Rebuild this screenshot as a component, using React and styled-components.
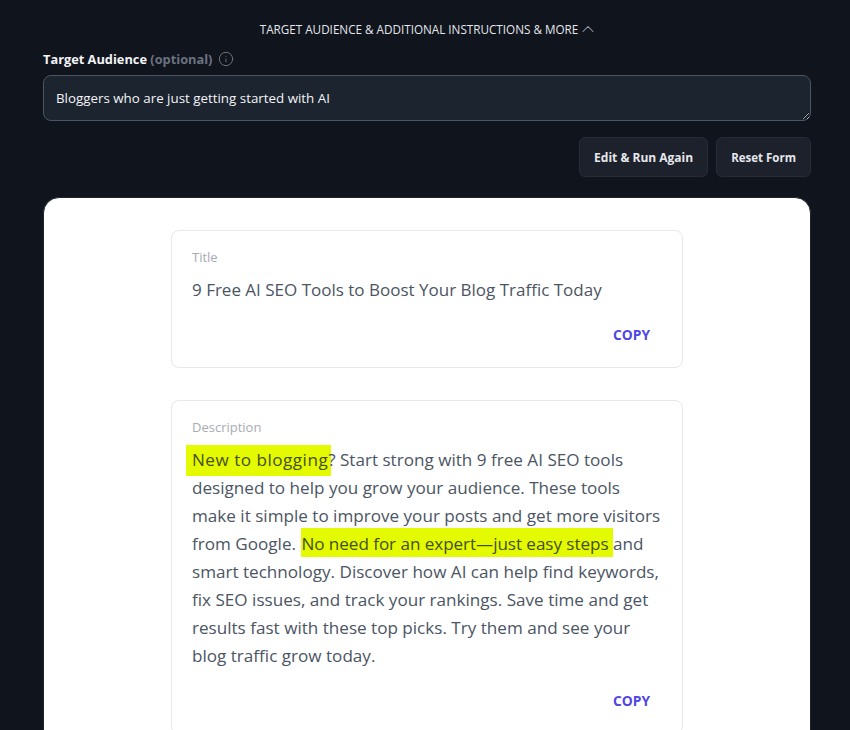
import React from 'react';
import styled, { createGlobalStyle } from 'styled-components';
import { ChevronUp, Info } from 'lucide-react';

const GlobalStyle = createGlobalStyle`
  html, body {
    margin: 0;
    height: 730px;
    overflow: hidden;
    background-color: #10141d;
  }
  * {
    box-sizing: border-box;
  }
`;

const Page = styled.div`
  width: 850px;
  padding: 0 39px 0 43px;
  font-family: "Open Sans", "Noto Sans", sans-serif;
`;

const Toggle = styled.div`
  display: flex;
  align-items: center;
  justify-content: center;
  height: 51px;
  padding: 7px 0 1px 4px;
  font-size: 11.7px;
  color: #e5e7eb;
  text-transform: uppercase;
`;

const LabelRow = styled.div`
  display: flex;
  align-items: center;
  gap: 6px;
  height: 16px;
  margin-bottom: 8px;
`;

const Label = styled.span`
  font-size: 12.8px;
  font-weight: 700;
  color: #f3f4f6;
`;

const Optional = styled.span`
  font-weight: 700;
  color: #6b7280;
`;

const InfoIcon = styled(Info)`
  width: 16px;
  height: 16px;
  color: #6b7280;
`;

const Field = styled.textarea`
  display: block;
  width: 100%;
  height: 46px;
  padding: 12px;
  background-color: #1c2430;
  border: 1px solid #4b5563;
  border-radius: 8px;
  outline: none;
  font-family: inherit;
  font-size: 13.35px;
  line-height: 20px;
  color: #f3f4f6;
`;

const Actions = styled.div`
  display: flex;
  justify-content: flex-end;
  gap: 8px;
  margin-top: 16px;
`;

const ActionButton = styled.button`
  height: 40px;
  padding: 0 14px;
  background-color: #1d212c;
  border: 1px solid #262b36;
  border-radius: 6px;
  font-family: inherit;
  font-size: ${(p) => p.$size}px;
  font-weight: 700;
  color: #e5e7eb;
`;

const Sheet = styled.main`
  display: flex;
  flex-direction: column;
  align-items: center;
  gap: 32px;
  margin-top: 20px;
  padding: 32px 0 40px;
  background-color: #fff;
  border: 1px solid #1f2430;
  border-radius: 16px;
`;

const OutputCard = styled.section`
  width: 512px;
  padding: 17px 32px 0 20px;
  border: 1px solid #e5e7eb;
  border-radius: 8px;
`;

const CardLabel = styled.div`
  font-size: 13px;
  line-height: 18px;
  color: #a8abb2;
`;

const TitleText = styled.p`
  margin: 10px 0 0;
  font-size: 17px;
  line-height: 28px;
  color: #4b5563;
`;

const BodyText = styled.p`
  margin: 10px -13px 0 0;
  font-size: 17.1px;
  line-height: 28px;
  color: #4b5563;
`;

const Mark = styled.mark`
  padding: ${(p) => p.$above}px ${(p) => p.$trail}px ${(p) => p.$below}px ${(p) => p.$lead}px;
  margin: 0 -${(p) => p.$trail}px 0 ${(p) => p.$shift}px;
  letter-spacing: ${(p) => p.$track}px;
  background-color: #e4fa00;
  color: #454f1c;
`;

const CardFooter = styled.div`
  display: flex;
  justify-content: flex-end;
  padding: 21px 0 22px;
`;

const CopyButton = styled.button`
  padding: 0;
  background: none;
  border: none;
  font-family: inherit;
  font-size: 13.8px;
  line-height: 20px;
  font-weight: 700;
  color: #4f46e5;
`;

export default function App() {
  return (
    <Page>
      <GlobalStyle />
      <Toggle>
        Target Audience &amp; Additional Instructions &amp; More
        <ChevronUp size={20} strokeWidth={1.25} color="#9ca3af" />
      </Toggle>
      <LabelRow>
        <Label>
          Target Audience <Optional>(optional)</Optional>
        </Label>
        <InfoIcon strokeWidth={1.5} />
      </LabelRow>
      <Field defaultValue="Bloggers who are just getting started with AI" />
      <Actions>
        <ActionButton $size={12}>Edit &amp; Run Again</ActionButton>
        <ActionButton $size={11.5}>Reset Form</ActionButton>
      </Actions>
      <Sheet>
        <OutputCard>
          <CardLabel>Title</CardLabel>
          <TitleText>9 Free AI SEO Tools to Boost Your Blog Traffic Today</TitleText>
          <CardFooter>
            <CopyButton>COPY</CopyButton>
          </CardFooter>
        </OutputCard>
        <OutputCard>
          <CardLabel>Description</CardLabel>
          <BodyText>
            <Mark $above={3} $below={5} $lead={6} $shift={-6} $trail={3} $track={0.5}>New to blogging</Mark>? Start strong with 9 free AI SEO tools designed to help
            you grow your audience. These tools make it simple to improve your posts and get more
            visitors from Google. <Mark $above={4} $below={2} $lead={0} $shift={1} $trail={0} $track={-0.05}>No need for an expert—just easy steps </Mark>and smart
            technology. Discover how AI can help find keywords, fix SEO issues, and track your
            rankings. Save time and get results fast with these top picks. Try them and see your
            blog traffic grow today.
          </BodyText>
          <CardFooter>
            <CopyButton>COPY</CopyButton>
          </CardFooter>
        </OutputCard>
      </Sheet>
    </Page>
  );
}
